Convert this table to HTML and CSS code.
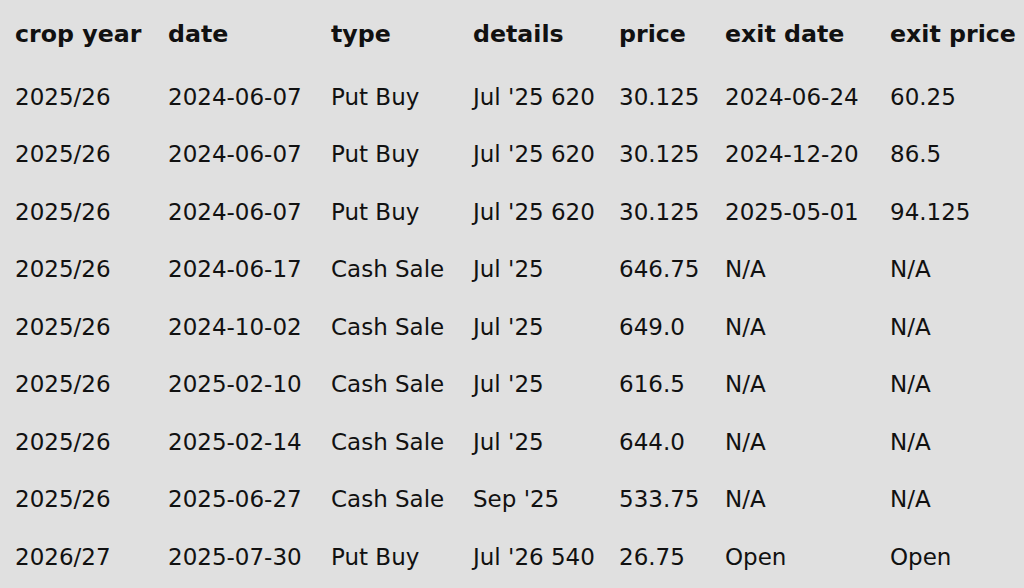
FILE: index.html
```html
<!DOCTYPE html>
<html>
<head>
<meta charset="utf-8">
<link rel="stylesheet" href="styles.css">
</head>
<body>
<table class="trades">
<colgroup>
<col class="c-crop"><col class="c-date"><col class="c-type"><col class="c-details"><col class="c-price"><col class="c-exitdate"><col class="c-exitprice">
</colgroup>
<thead>
<tr><th>crop year</th><th>date</th><th>type</th><th>details</th><th>price</th><th>exit date</th><th>exit price</th></tr>
</thead>
<tbody>
<tr><td>2025/26</td><td>2024-06-07</td><td>Put Buy</td><td>Jul '25 620</td><td>30.125</td><td>2024-06-24</td><td>60.25</td></tr>
<tr><td>2025/26</td><td>2024-06-07</td><td>Put Buy</td><td>Jul '25 620</td><td>30.125</td><td>2024-12-20</td><td>86.5</td></tr>
<tr><td>2025/26</td><td>2024-06-07</td><td>Put Buy</td><td>Jul '25 620</td><td>30.125</td><td>2025-05-01</td><td>94.125</td></tr>
<tr><td>2025/26</td><td>2024-06-17</td><td>Cash Sale</td><td>Jul '25</td><td>646.75</td><td>N/A</td><td>N/A</td></tr>
<tr><td>2025/26</td><td>2024-10-02</td><td>Cash Sale</td><td>Jul '25</td><td>649.0</td><td>N/A</td><td>N/A</td></tr>
<tr><td>2025/26</td><td>2025-02-10</td><td>Cash Sale</td><td>Jul '25</td><td>616.5</td><td>N/A</td><td>N/A</td></tr>
<tr><td>2025/26</td><td>2025-02-14</td><td>Cash Sale</td><td>Jul '25</td><td>644.0</td><td>N/A</td><td>N/A</td></tr>
<tr><td>2025/26</td><td>2025-06-27</td><td>Cash Sale</td><td>Sep '25</td><td>533.75</td><td>N/A</td><td>N/A</td></tr>
<tr><td>2026/27</td><td>2025-07-30</td><td>Put Buy</td><td>Jul '26 540</td><td>26.75</td><td>Open</td><td>Open</td></tr>
</tbody>
</table>
</body>
</html>
```

FILE: styles.css
```css
html, body {
  margin: 0;
  padding: 0;
  background: #e0e0e0;
}
body {
  font-family: "DejaVu Sans", Verdana, sans-serif;
  color: #111;
  font-size: 23px;
  overflow: hidden;
}
.trades {
  border-collapse: collapse;
  table-layout: fixed;
  width: 1009px;
  margin-left: 15px;
}
.c-crop { width: 153px; }
.c-date { width: 163px; }
.c-type { width: 142px; }
.c-details { width: 146px; }
.c-price { width: 106px; }
.c-exitdate { width: 165px; }
.c-exitprice { width: 134px; }
.trades th,
.trades td {
  padding: 0;
  text-align: left;
  white-space: nowrap;
  vertical-align: middle;
}
.trades th {
  font-weight: bold;
  font-size: 23.7px;
  height: 68px;
}
.trades td {
  height: 57.5px;
}
```
